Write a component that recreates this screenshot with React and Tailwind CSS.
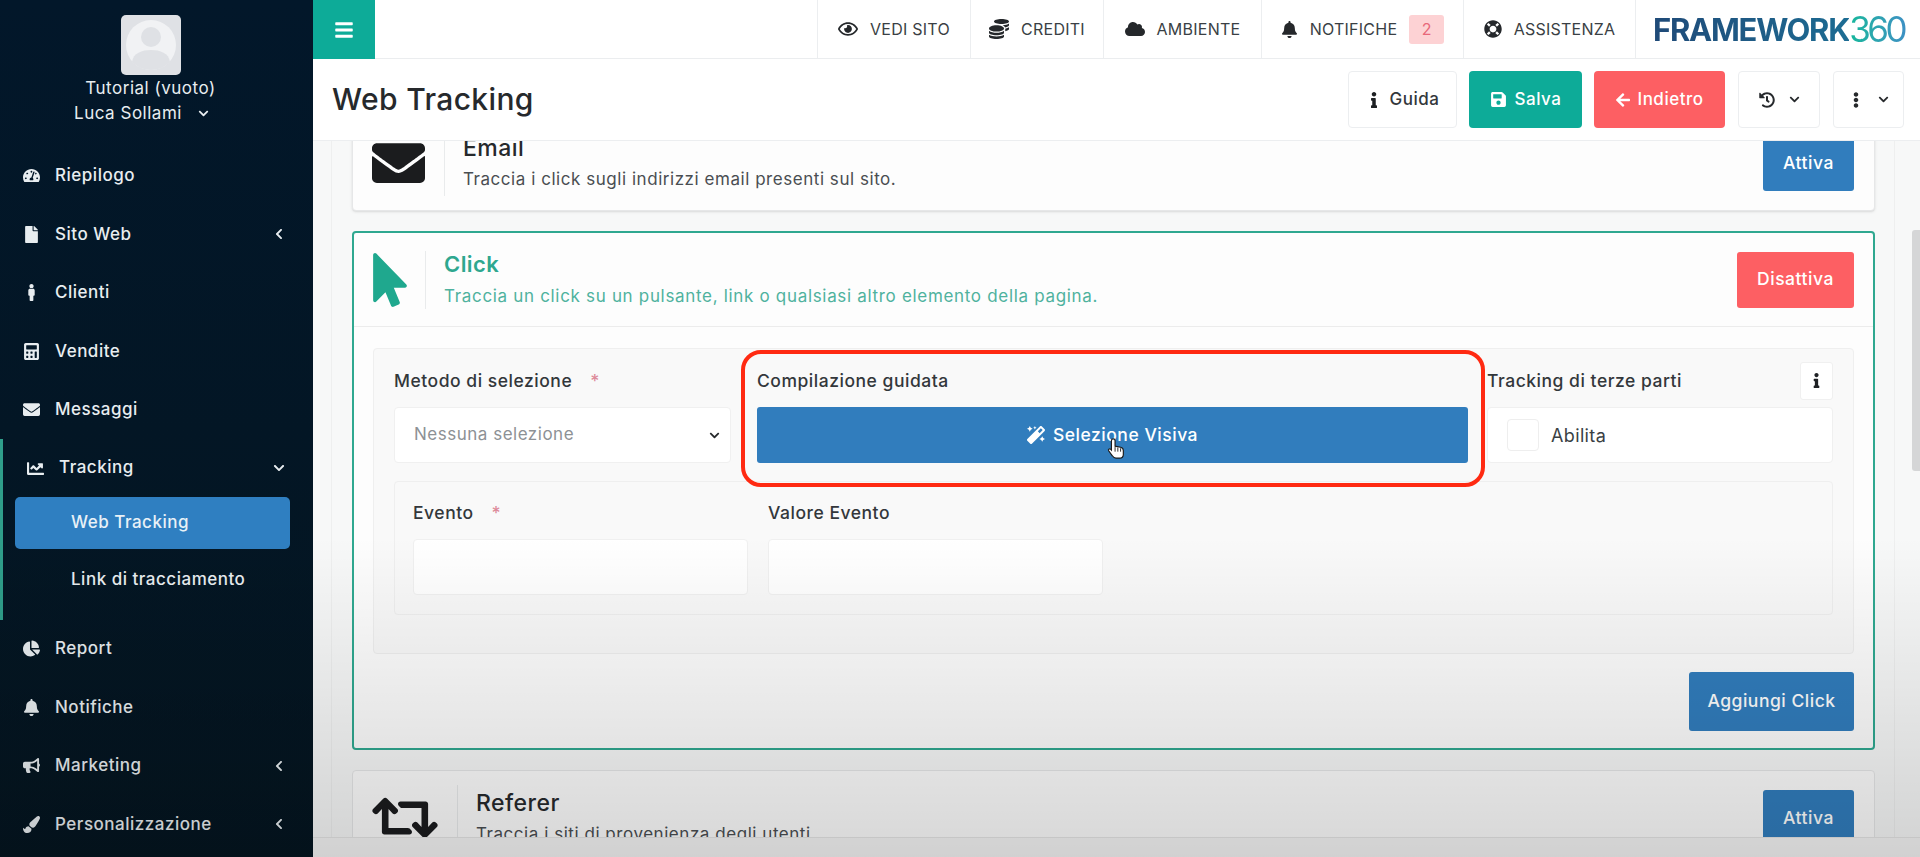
import {
  FaArrowLeft, FaBars, FaBell, FaBullhorn, FaCalculator, FaChartLine, FaChartPie, FaChevronDown, FaChevronLeft,
  FaCloud, FaCoins, FaEllipsisV, FaEnvelope, FaFile, FaHistory, FaInfo, FaLifeRing, FaMagic, FaMale, FaMousePointer,
  FaPaintBrush, FaRegEye, FaRetweet, FaSave, FaTachometerAlt,
} from 'react-icons/fa';

const topItems = [
  { label: 'VEDI SITO', icon: FaRegEye, width: 'w-[153px]' },
  { label: 'CREDITI', icon: FaCoins, width: 'w-[133px]' },
  { label: 'AMBIENTE', icon: FaCloud, width: 'w-[158px]' },
];

function SideItem({ icon: Icon, label, arrow }) {
  return (
    <div className="h-[58.5px] flex items-center pl-[21px] pr-[28px] text-[#e8edf0] text-[17px] font-medium tracking-[0.03em]">
      <span className="w-[20px] flex justify-center"><Icon className="text-[17px]" /></span>
      <span className="ml-[14px]">{label}</span>
      {arrow && <FaChevronLeft className="ml-auto text-[12px]" />}
    </div>
  );
}

function Sidebar() {
  return (
    <aside className="w-[313px] shrink-0 bg-gradient-to-b from-[#02172a] to-[#041520] flex flex-col">
      <div className="h-[146.500px] pt-[15px] pr-[12px] flex flex-col items-center text-[#e8edf0] text-[17px] tracking-[0.03em]">
        <div className="w-[60px] h-[60px] rounded-[5px] bg-[#dfe1e5] overflow-hidden">
          <svg viewBox="0 0 60 60" className="w-full h-full">
            <circle cx="30" cy="30" r="25" fill="#f1f2f4" />
            <circle cx="30" cy="22" r="10" fill="#dfe1e5" />
            <path d="M11 47c1-9 10-12 19-12s18 3 19 12c-5 5-12 8-19 8s-14-3-19-8z" fill="#dfe1e5" />
          </svg>
        </div>
        <div className="mt-[1px] leading-[24px]">Tutorial (vuoto)</div>
        <div className="mr-[18px] flex items-center gap-[16px] leading-[26px]">
          Luca Sollami
          <FaChevronDown className="text-[11px]" />
        </div>
      </div>
      <SideItem icon={FaTachometerAlt} label="Riepilogo" />
      <SideItem icon={FaFile} label="Sito Web" arrow />
      <SideItem icon={FaMale} label="Clienti" />
      <SideItem icon={FaCalculator} label="Vendite" />
      <SideItem icon={FaEnvelope} label="Messaggi" />
      <div className="h-[180.500px] border-l-[3px] border-[#2f9e8a]">
        <div className="h-[58px] flex items-center pl-[22px] pr-[28px] text-[#e8edf0] text-[17px] font-medium tracking-[0.03em]">
          <span className="w-[20px] flex justify-center"><FaChartLine className="text-[17px]" /></span>
          <span className="ml-[14px]">Tracking</span>
          <FaChevronDown className="ml-auto text-[12px]" />
        </div>
        <div className="ml-[12px] mr-[23px] h-[52px] rounded-[5px] bg-[#2f7fc1] flex items-center pl-[56px] text-[#e8f1f7] text-[17px] font-medium tracking-[0.03em]">
          Web Tracking
        </div>
        <div className="h-[62px] flex items-center pl-[68px] text-[#e8edf0] text-[17px] font-medium tracking-[0.03em]">
          Link di tracciamento
        </div>
      </div>
      <SideItem icon={FaChartPie} label="Report" />
      <SideItem icon={FaBell} label="Notifiche" />
      <SideItem icon={FaBullhorn} label="Marketing" arrow />
      <SideItem icon={FaPaintBrush} label="Personalizzazione" arrow />
    </aside>
  );
}

function TopBar() {
  return (
    <header className="h-[59px] shrink-0 bg-white border-b border-[#ebedef] flex items-stretch text-[#3a3f44] text-[16px] tracking-[0.015em]">
      <div className="w-[62px] h-[59px] bg-[#0dab98] flex items-center justify-center text-white">
        <FaBars className="text-[20px]" />
      </div>
      <div className="ml-auto flex items-stretch">
        {topItems.map(({ label, icon: Icon, width }) => (
          <div key={label} className={`${width} border-l border-[#eceef0] flex items-center justify-center gap-[12px]`}>
            <Icon className="text-[20px] text-[#25282b]" />
            {label}
          </div>
        ))}
        <div className="w-[202px] border-l border-[#eceef0] flex items-center justify-center gap-[12px]">
          <FaBell className="text-[17px] text-[#25282b]" />
          NOTIFICHE
          <span className="w-[35px] h-[29px] rounded-[3px] bg-[#fdd2d4] text-[#e8687a] flex items-center justify-center">2</span>
        </div>
        <div className="w-[172px] border-l border-[#eceef0] flex items-center justify-center gap-[12px]">
          <FaLifeRing className="text-[18px] text-[#25282b]" />
          ASSISTENZA
        </div>
        <div className="w-[285px] border-l border-[#eceef0] flex items-center pl-[17px] text-[31px] leading-none tracking-[-0.04em]">
          <span className="font-bold bg-gradient-to-r from-[#1f4a78] to-[#1c6c93] bg-clip-text text-transparent">FRAMEWORK</span>
          <span className="text-[35px] font-normal tracking-[-0.1em] pr-[3px] bg-gradient-to-r from-[#14b79b] to-[#3d8fc4] bg-clip-text text-transparent">360</span>
        </div>
      </div>
    </header>
  );
}

function PageHeader() {
  return (
    <div className="h-[82px] shrink-0 bg-white border-b border-[#eceef0] flex items-center pl-[19px] pr-[16px] text-[17px] font-medium tracking-[0.03em]">
      <h1 className="text-[30px] font-medium text-[#26292c] tracking-[0.012em]">Web Tracking</h1>
      <div className="ml-auto flex items-center">
        <button className="w-[109px] h-[57px] bg-white border border-[#eceef0] rounded-[4px] flex items-center justify-center gap-[8px] text-[#33373b]">
          <FaInfo className="text-[#1e2124] text-[16px]" /> Guida
        </button>
        <button className="ml-[12px] w-[113px] h-[57px] bg-[#0dab98] rounded-[4px] flex items-center justify-center gap-[8px] text-white">
          <FaSave className="text-[17px]" /> Salva
        </button>
        <button className="ml-[12px] w-[131px] h-[57px] bg-[#fd5f63] rounded-[4px] flex items-center justify-center gap-[6px] text-white">
          <FaArrowLeft className="text-[16px]" /> Indietro
        </button>
        <button className="ml-[13px] w-[82px] h-[57px] bg-white border border-[#eceef0] rounded-[4px] flex items-center justify-center gap-[14px] text-[#26292c]">
          <FaHistory className="text-[16px]" /> <FaChevronDown className="text-[11px]" />
        </button>
        <button className="ml-[13px] w-[71px] h-[57px] bg-white border border-[#eceef0] rounded-[4px] flex items-center justify-center gap-[14px] text-[#26292c]">
          <FaEllipsisV className="text-[16px]" /> <FaChevronDown className="text-[11px]" />
        </button>
      </div>
    </div>
  );
}

function CardHead({ icon, title, desc, green, className }) {
  return (
    <div className={`flex items-center ${className}`}>
      <div className="flex items-center self-stretch">{icon}</div>
      <div className={`self-stretch w-px bg-[#e9ebec] ${green ? 'ml-[18px]' : 'ml-[19px]'}`} />
      <div className={`pl-[18px] ${green ? 'text-[#2ea78f]' : 'text-[#26292c]'}`}>
        <div className={`leading-[30px] tracking-[0.02em] ${green ? 'text-[22px] font-semibold' : 'text-[23px] font-medium'}`}>{title}</div>
        <div className={`text-[17px] leading-[28px] ${green ? 'mt-[3px] tracking-[0.04em] text-[#4fb29e]' : 'mt-[2px] tracking-[0.032em] text-[#4a4e52]'}`}>{desc}</div>
      </div>
    </div>
  );
}

function Label({ children, required }) {
  return (
    <div className="h-[24px] text-[17.5px] leading-[24px] font-medium text-[#33373b] tracking-[0.03em]">
      {children}
      {required && <span className="ml-[18px] text-[#dd8a9a]">*</span>}
    </div>
  );
}

function ClickForm() {
  return (
    <div className="relative mx-[19px] mt-[21px] h-[306px] bg-[#f9f9f9] border border-[#efefef] rounded-[4px] pt-[20px] px-[20px]">
      <div className="flex">
        <div className="w-[337px] shrink-0">
          <Label required>Metodo di selezione</Label>
          <div className="mt-[14px] h-[56px] bg-white border border-[#f0f0f0] rounded-[4px] flex items-center justify-between pl-[19px] pr-[10px] text-[17px] text-[#8d9195] tracking-[0.03em]">
            Nessuna selezione
            <FaChevronDown className="text-[11px] text-[#26292c]" />
          </div>
        </div>
        <div className="ml-[26px] w-[711px] shrink-0">
          <Label>Compilazione guidata</Label>
          <button className="mt-[14px] w-full h-[56px] bg-[#317dbd] rounded-[3px] flex items-center justify-center gap-[8px] text-white text-[17.5px] font-medium tracking-[0.03em]">
            <FaMagic className="text-[18px]" /> Selezione Visiva
          </button>
        </div>
        <div className="ml-[19px] flex-1">
          <div className="flex items-center justify-between h-[24px]">
            <Label>Tracking di terze parti</Label>
            <div className="w-[33px] h-[38px] -mt-[1px] bg-white border border-[#f0f0f0] rounded-[3px] flex items-center justify-center">
              <FaInfo className="text-[15px] text-[#1e2124]" />
            </div>
          </div>
          <div className="mt-[14px] h-[56px] bg-white border border-[#f0f0f0] rounded-[4px] flex items-center pl-[19px] gap-[12px] text-[18px] text-[#3a3f44] tracking-[0.02em]">
            <span className="w-[32px] h-[32px] border border-[#eeeeee] rounded-[4px] bg-white" />
            Abilita
          </div>
        </div>
      </div>
      <div className="mt-[18px] h-[134px] border border-[#efefef] rounded-[4px] pt-[19px] px-[18px]">
        <div className="flex gap-[20px]">
          <div className="w-[335px]">
            <Label required>Evento</Label>
            <div className="mt-[14px] h-[56px] bg-white border border-[#f0f0f0] rounded-[4px]" />
          </div>
          <div className="w-[335px]">
            <Label>Valore Evento</Label>
            <div className="mt-[14px] h-[56px] bg-white border border-[#f0f0f0] rounded-[4px]" />
          </div>
        </div>
      </div>
      {/* riquadro rosso del tutorial */}
      <div className="absolute left-[367px] top-[1px] w-[744px] h-[137px] border-[4px] border-[#ff2a12] rounded-[20px] pointer-events-none" />
      <svg viewBox="0 0 24 24" className="absolute left-[731px] top-[85px] w-[22px] h-[28px]">
        <path d="M9 2c1.2 0 2 .8 2 2v6l6 1.2c2 .5 3 1.6 3 3.5V19c0 2-1.5 4-4 4h-4c-2 0-3-1-4-2.5L4 15c-.8-1.3.8-2.8 2-1.8l1 1V4c0-1.2.8-2 2-2z" fill="#fff" stroke="#1c1c1c" strokeWidth="1.3" />
        <path d="M11 11v5M14 11.5V16M17 12.3V16" stroke="#1c1c1c" strokeWidth="1" />
      </svg>
    </div>
  );
}

function Content() {
  return (
    <div className="flex-1 flex overflow-hidden bg-[#f7f8f8]">
      <div className="flex-1 ml-[18px] mr-[17px] pl-[20px] pr-[19px] border-x border-[#eeefef] overflow-hidden">
        <section className="-mt-[30px] h-[100px] bg-[#fdfdfd] border border-[#e6e7e8] rounded-[4px] shadow-sm flex items-start justify-between pl-[19px] pr-[20px] pt-[18px]">
          <CardHead
            icon={<FaEnvelope className="w-[53px] h-[60px] text-[#1b1c1e]" />}
            title="Email"
            desc="Traccia i click sugli indirizzi email presenti sul sito."
            className="h-[66px]"
          />
          <button className="w-[91px] h-[56px] mt-[5px] bg-[#317dbd] rounded-[3px] text-white text-[17.5px] font-medium tracking-[0.03em]">Attiva</button>
        </section>

        <section className="mt-[20px] h-[519px] bg-[#fdfdfd] border-2 border-[#2fa890] rounded-[4px]">
          <div className="h-[94px] border-b border-[#ececec] flex items-center justify-between pl-[19px] pr-[19px]">
            <CardHead
              icon={<FaMousePointer className="w-[34px] h-[54px] text-[#1fa88e]" />}
              title="Click"
              desc="Traccia un click su un pulsante, link o qualsiasi altro elemento della pagina."
              green
              className="h-[58px]"
            />
            <button className="w-[117px] h-[56px] bg-[#fd5f63] rounded-[3px] text-white text-[17.5px] font-medium tracking-[0.03em]">Disattiva</button>
          </div>
          <ClickForm />
          <div className="flex justify-end pr-[19px] mt-[18px]">
            <button className="w-[165px] h-[59px] bg-[#317dbd] rounded-[3px] text-white text-[17.5px] font-medium tracking-[0.03em]">Aggiungi Click</button>
          </div>
        </section>

        <section className="mt-[20px] h-[100px] bg-[#fdfdfd] border border-[#e6e7e8] rounded-[4px] flex items-start justify-between pl-[19px] pr-[20px] pt-[14px]">
          <CardHead
            icon={<FaRetweet className="w-[66px] h-[54px] text-[#1b1c1e]" />}
            title="Referer"
            desc="Traccia i siti di provenienza degli utenti"
            className="h-[66px]"
          />
          <button className="w-[91px] h-[56px] mt-[5px] bg-[#317dbd] rounded-[3px] text-white text-[17.5px] font-medium tracking-[0.03em]">Attiva</button>
        </section>
      </div>
      <div className="w-[8px] shrink-0">
        <div className="mt-[89px] h-[241px] bg-[#d5d6d7] rounded-l-[3px]" />
      </div>
    </div>
  );
}

export default function App() {
  return (
    <div className="relative h-screen w-full flex overflow-hidden bg-white font-['Inter','Liberation_Sans',sans-serif]">
      <Sidebar />
      <main className="flex-1 min-w-0 flex flex-col">
        <TopBar />
        <PageHeader />
        <Content />
        <div className="h-[20px] shrink-0 bg-[#f6f6f6] border-t border-[#e6e6e6]" />
      </main>
      {/* velatura del video in basso */}
      <div className="absolute inset-x-0 bottom-0 h-[320px] bg-gradient-to-b from-transparent to-black/15 pointer-events-none" />
    </div>
  );
}
